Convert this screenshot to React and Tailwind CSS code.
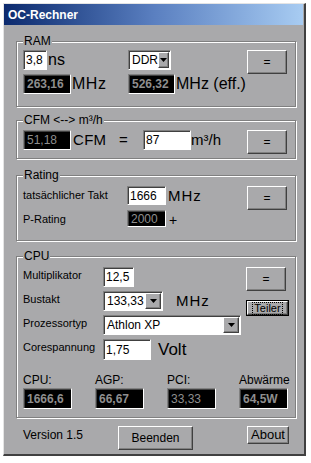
const sunken =
  "border border-t-[#808080] border-l-[#808080] border-b-white border-r-white shadow-[inset_1px_1px_0_#404040]";
const raised =
  "border border-t-white border-l-white border-r-[#404040] border-b-[#404040] shadow-[inset_-1px_-1px_0_#808080] bg-[#a9a9ab]";
const etched =
  "relative border border-[#808080] shadow-[inset_1px_1px_0_#fff,1px_1px_0_#fff]";

const Input = ({ className, children }) => (
  <div className={`${sunken} bg-white text-[12px] text-black pl-[2px] flex items-center ${className}`}>
    {children}
  </div>
);

const Dark = ({ className, children, bold }) => (
  <div
    className={`${sunken} bg-black text-[12px] text-[#8e8e8e] pl-[3px] flex items-center ${
      bold ? "font-bold" : ""
    } ${className}`}
  >
    {children}
  </div>
);

const Arrow = () => (
  <div className={`${raised} w-[16px] h-full flex items-center justify-center`}>
    <svg width="7" height="4" viewBox="0 0 7 4">
      <polygon points="0,0 7,0 3.5,4" fill="#000" />
    </svg>
  </div>
);

const Select = ({ className, children }) => (
  <div className={`${sunken} bg-white text-[12px] text-black flex items-stretch p-[1px] ${className}`}>
    <span className="flex-1 flex items-center pl-[2px]">{children}</span>
    <Arrow />
  </div>
);

const Button = ({ className, children }) => (
  <div className={`${raised} flex items-center justify-center text-[12px] text-black ${className}`}>
    {children}
  </div>
);

const Group = ({ label, className, children }) => (
  <div className={`${etched} w-[280px] ${className}`}>
    <span className="absolute left-[6px] top-[-8px] px-[1px] bg-[#a9a9ab] text-[12px] leading-[14px] text-black">
      {label}
    </span>
    {children}
  </div>
);

const Label = ({ children }) => (
  <span className="w-[80px] text-[11px] leading-[14px] pt-[1px] text-black">{children}</span>
);

export default function App() {
  return (
    <div className="w-[311px] h-[463px] bg-white pt-[3px] pl-[3px] font-['Liberation_Sans',Arial,sans-serif] text-black">
      <div className="w-[303px] h-[453px] bg-[#a9a9ab] border-l border-t border-l-[#e4e4e4] border-t-[#e4e4e4] border-r-2 border-b-2 border-r-[#404040] border-b-[#404040]">
        {/* title bar */}
        <div className="h-[21px] mr-[1px] bg-linear-to-r from-[#0c2a6e] via-[#5a7fc0] to-[#a8ccf2] flex items-center pl-[4px]">
          <span className="text-white font-bold text-[12px]">OC-Rechner</span>
        </div>

        <div className="pl-[12px]">
          {/* RAM */}
          <Group label="RAM" className="mt-[16px] h-[66px] pt-[8px] pl-[6px] pr-[8px] flex">
            <div className="flex flex-col gap-[4px]">
              <div className="flex h-[20px]">
                <div className="w-[105px] flex items-center">
                  <Input className="w-[24px] h-[20px]">3,8</Input>
                  <span className="text-[16px] ml-[1px] leading-[20px]">ns</span>
                </div>
                <Select className="w-[43px] h-[20px]">DDR</Select>
              </div>
              <div className="flex h-[20px]">
                <div className="w-[105px] flex items-center">
                  <Dark bold className="w-[48px] h-[20px]">263,16</Dark>
                  <span className="text-[16px] ml-[1px] tracking-[0.5px]">MHz</span>
                </div>
                <Dark bold className="w-[47px] h-[20px]">526,32</Dark>
                <span className="text-[16px] ml-[1px] leading-[20px]">MHz (eff.)</span>
              </div>
            </div>
            <Button className="ml-auto w-[40px] h-[24px]">=</Button>
          </Group>

          {/* CFM */}
          <Group label="CFM <--> m³/h" className="mt-[13px] h-[39px] pt-[9px] pl-[6px] pr-[8px] flex items-start">
            <Dark className="w-[48px] h-[20px]">51,18</Dark>
            <span className="w-[48px] text-[15px] leading-[20px] pl-[2px] tracking-[0.3px]">CFM</span>
            <span className="w-[24px] text-[15px] leading-[20px]">=</span>
            <Input className="w-[48px] h-[20px]">87</Input>
            <span className="text-[15px] leading-[20px]">m³/h</span>
            <Button className="ml-auto w-[40px] h-[24px]">=</Button>
          </Group>

          {/* Rating */}
          <Group label="Rating" className="mt-[16px] h-[66px] pt-[10px] pl-[6px] pr-[8px] flex">
            <div className="flex flex-col">
              <div className="flex h-[19px]">
                <span className="w-[104px] text-[11px] leading-[14px] pt-[2px]">tatsächlicher Takt</span>
                <Input className="w-[39px] h-[19px]">1666</Input>
                <span className="text-[15px] ml-[2px] leading-[19px] tracking-[1px]">MHz</span>
              </div>
              <div className="flex h-[17px] mt-[5px]">
                <span className="w-[104px] text-[11px] leading-[14px] pt-[2px]">P-Rating</span>
                <Dark className="w-[39px] h-[17px]">2000</Dark>
                <span className="text-[14px] ml-[3px] leading-[20px]">+</span>
              </div>
            </div>
            <Button className="ml-auto w-[40px] h-[24px]">=</Button>
          </Group>

          {/* CPU */}
          <Group label="CPU" className="mt-[15px] h-[162px] pt-[10px] pl-[6px] pr-[6px] flex flex-col">
            <div className="flex">
              <div className="flex flex-col">
                <div className="flex h-[20px]">
                  <Label>Multiplikator</Label>
                  <Input className="w-[31px] h-[20px]">12,5</Input>
                </div>
                <div className="flex h-[20px] mt-[4px]">
                  <Label>Bustakt</Label>
                  <Select className="w-[60px] h-[20px]">133,33</Select>
                  <span className="ml-[13px] text-[15px] leading-[20px] tracking-[1px]">MHz</span>
                </div>
                <div className="flex h-[20px] mt-[4px]">
                  <Label>Prozessortyp</Label>
                  <Select className="w-[138px] h-[20px]">Athlon XP</Select>
                </div>
                <div className="flex h-[21px] mt-[4px]">
                  <Label>Corespannung</Label>
                  <Input className="w-[48px] h-[21px]">1,75</Input>
                  <span className="ml-[7px] text-[17px] leading-[21px]">Volt</span>
                </div>
              </div>
              <div className="ml-auto w-[43px] flex flex-col items-start">
                <Button className="w-[40px] h-[24px]">=</Button>
                <div className="mt-[9px] w-[43px] h-[16px] border border-black">
                  <div className={`${raised} w-full h-full flex items-center justify-center`}>
                    <span className="outline outline-1 outline-dotted outline-black px-[1px] text-[11px] leading-[11px]">
                      Teiler
                    </span>
                  </div>
                </div>
              </div>
            </div>
            <div className="grid grid-cols-[72px_72px_72px_72px] mt-[13px]">
              {[
                ["CPU:", "1666,6", true],
                ["AGP:", "66,67", true],
                ["PCI:", "33,33", false],
                ["Abwärme", "64,5W", true],
              ].map(([label, value, bold]) => (
                <div key={label} className="flex flex-col">
                  <span className="text-[12px] leading-[14px]">{label}</span>
                  <Dark bold={bold} className="w-[49px] h-[21px] mt-[1px]">
                    {value}
                  </Dark>
                </div>
              ))}
            </div>
          </Group>

          {/* footer */}
          <div className="w-[280px] mt-[8px] pl-[7px] pr-[7px] flex items-start">
            <span className="w-[95px] text-[12px] leading-[14px] pt-[2px]">Version 1.5</span>
            <Button className="w-[75px] h-[24px] text-[12px]">Beenden</Button>
            <Button className="ml-auto w-[42px] h-[18px] text-[13px]">About</Button>
          </div>
        </div>
      </div>
    </div>
  );
}
